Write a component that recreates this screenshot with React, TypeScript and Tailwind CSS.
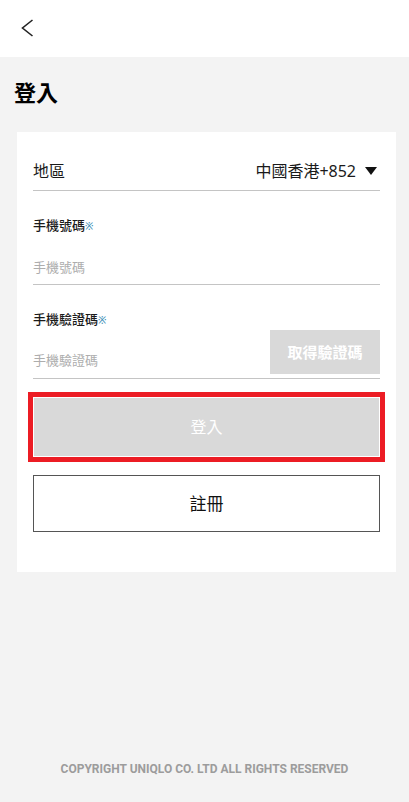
const font = { fontFamily: '"Noto Sans", "Noto Sans CJK TC", sans-serif' }

function Label({ text }: { text: string }) {
  return (
    <div className="text-[13px] font-medium leading-[18px] text-[#1a1a1a]">
      {text}<span className="text-[10px] text-[#3d8fb8]">※</span>
    </div>
  )
}

export default function App() {
  return (
    <div className="flex min-h-screen flex-col bg-[#f3f3f3]" style={font}>
      <header className="flex h-[57px] items-center bg-white pl-[21px]">
        <svg width="13" height="18" viewBox="0 0 13 18" className="-mt-[2px]">
          <path d="M11.5 1 L1.5 9 L11.5 17" fill="none" stroke="#222" strokeWidth="1.6" />
        </svg>
      </header>

      <main className="pl-[17px] pr-[13px]">
        <h1 className="-ml-[3px] pt-[20px] text-[22px] font-bold leading-[30px] text-black">登入</h1>

        <div className="mt-[25px] bg-white px-[16px] pt-[22px] pb-[40px]">
          <div className="flex h-[37px] items-center justify-between border-b border-[#c4c4c4] pb-[2px]">
            <span className="text-[16px] text-[#1a1a1a]">地區</span>
            <div className="flex items-center gap-[9px] pr-[3px]">
              <span className="text-[16px] text-[#1a1a1a]">中國香港+852</span>
              <svg width="12" height="8" viewBox="0 0 12 8">
                <path d="M0 0 H12 L6 8 Z" fill="#111" />
              </svg>
            </div>
          </div>

          <div className="mt-[25px]">
            <Label text="手機號碼" />
            <div className="flex h-[50px] items-end border-b border-[#c4c4c4] pb-[8px] text-[13px] leading-[18px] text-[#adadad]">
              手機號碼
            </div>
          </div>

          <div className="mt-[25px]">
            <Label text="手機驗證碼" />
            <div className="flex items-end border-b border-[#c4c4c4]">
              <div className="flex-1 pb-[9px] text-[13px] leading-[18px] text-[#adadad]">手機驗證碼</div>
              <button className="mb-[4px] mt-[1px] h-[44px] w-[110px] bg-[#d9d9d9] text-[15px] font-bold text-white">
                取得驗證碼
              </button>
            </div>
          </div>

          <div className="relative mt-[18px]">
            <div className="pointer-events-none absolute -inset-[5px] border-[5px] border-[#ec1c24]" />
            <button className="h-[60px] w-full border border-white bg-[#d9d9d9] text-[16px] text-white">登入</button>
          </div>

          <button className="mt-[18px] h-[57px] w-full border border-[#555] bg-white text-[17px] text-[#111]">
            註冊
          </button>
        </div>
      </main>

      <footer className="mt-auto pb-[23px] text-center">
        <span className="text-[12px] font-bold leading-[14px] text-[#9c9c9c]" style={{ fontFamily: "Roboto, sans-serif" }}>
          COPYRIGHT UNIQLO CO. LTD ALL RIGHTS RESERVED
        </span>
      </footer>
    </div>
  )
}
